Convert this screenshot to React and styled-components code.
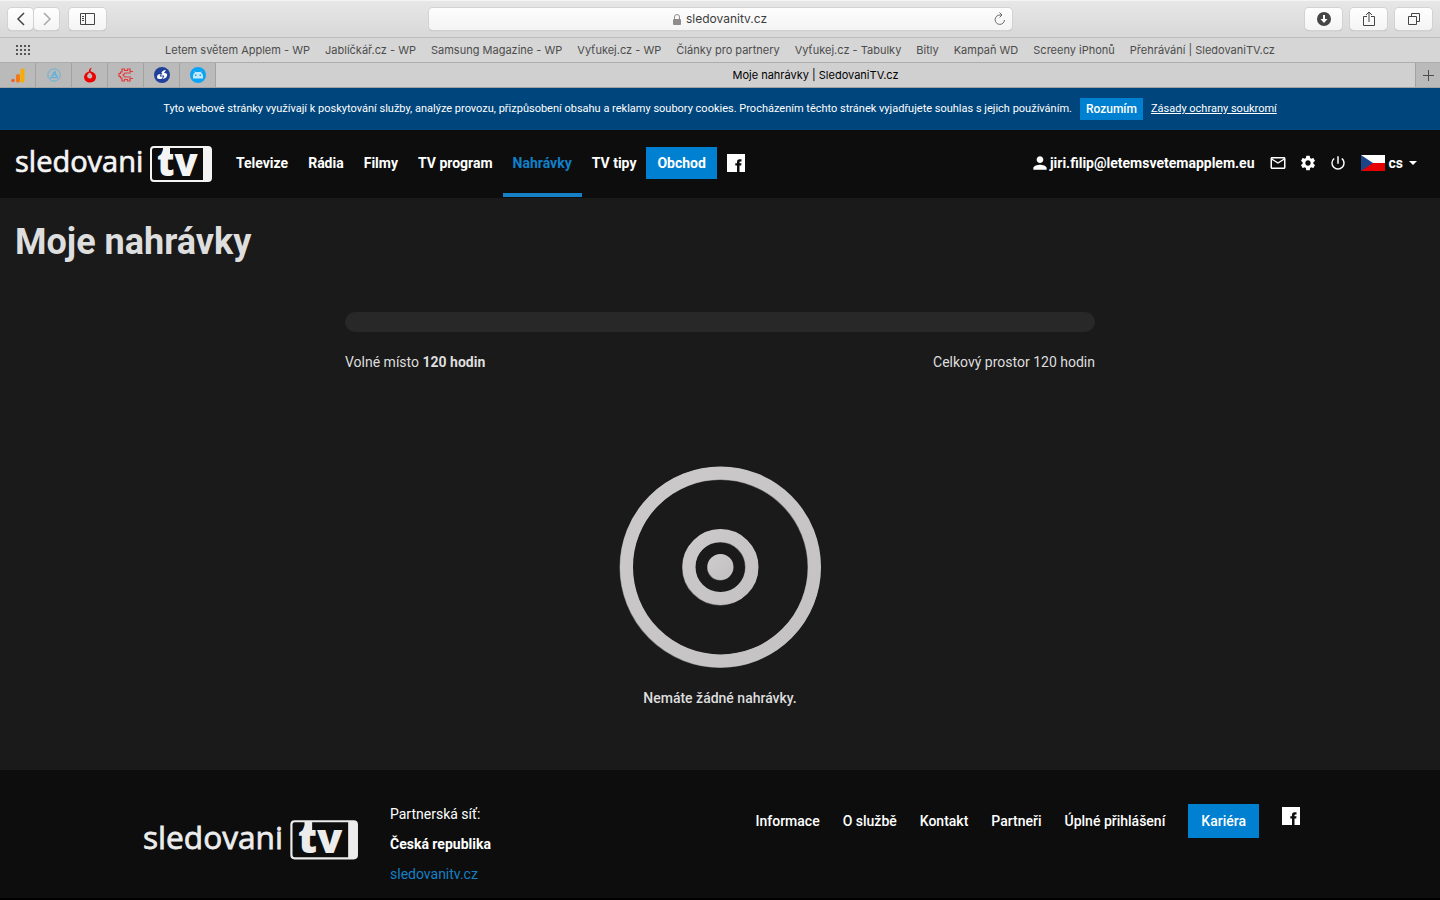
import * as React from 'react';
import styled, { createGlobalStyle } from 'styled-components';
import {
  MdPerson,
  MdOutlineMail,
  MdSettings,
  MdPowerSettingsNew,
} from 'react-icons/md';

const GlobalStyle = createGlobalStyle`
  * {
    box-sizing: border-box;
  }
  body {
    margin: 0;
    background: #000;
    color: #fff;
    font-family: Roboto, 'Liberation Sans', sans-serif;
    font-size: 14px;
    line-height: 20px;
  }
  a {
    color: inherit;
    text-decoration: none;
  }
  button {
    border: 0;
    padding: 0;
    font: inherit;
    color: inherit;
    background: none;
    cursor: pointer;
  }
  svg {
    display: block;
    flex: none;
  }
`;

const SPage = styled.div`
  min-height: 100vh;
  display: flex;
  flex-direction: column;
`;

/* browser window */

const SBrowser = styled.div`
  font-family: Inter, 'Liberation Sans', sans-serif;
  font-size: 11px;
  color: #4c4c4c;
`;

const SToolbar = styled.div`
  height: 38px;
  display: grid;
  grid-template-columns: 1fr 583px 1fr;
  align-items: center;
  padding: 0 8px;
  background: linear-gradient(#e7e7e7, #d8d8d8);
  border-top: 1px solid #f4f4f4;
  border-bottom: 1px solid #bdbdbd;
`;

const SToolGroup = styled.div`
  display: flex;
  justify-content: ${({ end }) => (end ? 'flex-end' : 'flex-start')};
  gap: ${({ gap }) => gap}px;
`;

const SToolButton = styled.button`
  width: ${({ narrow }) => (narrow ? 25 : 37)}px;
  height: 22px;
  display: flex;
  align-items: center;
  justify-content: center;
  border-radius: 4px;
  background: linear-gradient(#fff, #f4f4f4);
  box-shadow: 0 0 0 1px #d2d2d2, 0 1px 1px #a8a8a8;
  color: ${({ disabled }) => (disabled ? '#a8a8a8' : '#454545')};
`;

const SAddressBar = styled.div`
  height: 22px;
  display: grid;
  grid-template-columns: 24px 1fr 24px;
  align-items: center;
  justify-items: center;
  border-radius: 4px;
  background: linear-gradient(#fdfdfd, #f4f4f4);
  box-shadow: 0 0 0 1px #d2d2d2, 0 1px 1px #a8a8a8;
`;

const SAddress = styled.div`
  grid-column: 2;
  display: flex;
  align-items: center;
  gap: 5px;
  font-size: 12px;
  color: #3c3c3c;
`;

const SBookmarks = styled.div`
  height: 25px;
  display: grid;
  grid-template-columns: 32px 1fr 32px;
  align-items: center;
  background: #d6d6d6;
  border-bottom: 1px solid #adadad;

  & > svg {
    justify-self: end;
  }
`;

const SBookmarkList = styled.nav`
  display: flex;
  justify-content: center;
  gap: 15px;
  white-space: nowrap;
`;

const STabs = styled.div`
  height: 25px;
  display: flex;
  border-bottom: 1px solid #a3a3a3;
  background: #bababa;
`;

const SPinnedTab = styled.button`
  width: 36px;
  display: flex;
  align-items: center;
  justify-content: center;
  border-right: 1px solid #a3a3a3;
`;

const SActiveTab = styled.button`
  flex: 1;
  background: #d0d0d0;
  color: #000;
`;

const SNewTab = styled.button`
  width: 25px;
  display: flex;
  align-items: center;
  justify-content: center;
  border-left: 1px solid #a3a3a3;
`;

/* site */

const SCookies = styled.div`
  height: 42px;
  display: flex;
  align-items: center;
  justify-content: center;
  background: #00467c;
  font-size: 11px;
  white-space: nowrap;

  & a {
    text-decoration: underline;
  }
`;

const SAccept = styled.button`
  margin: 0 8px;
  padding: 0 6px;
  height: 22px;
  background: #0080d0;
  font-size: 12px;
  font-weight: 500;
`;

const SHeader = styled.header`
  height: 68px;
  display: flex;
  justify-content: space-between;
  padding: 0 21px 2px 15px;
  background: #0d0d0d;
  font-weight: 700;
`;

const SMenu = styled.nav`
  display: flex;
  align-items: center;

  & > a:first-child {
    margin-right: 14px;
  }
`;

const SMenuLink = styled.a`
  height: 68px;
  padding: 24px 10px 0;
  color: ${({ $active }) => ($active ? '#0f80cb' : '#fff')};
  border-bottom: 4px solid ${({ $active }) => ($active ? '#1580c6' : 'transparent')};
`;

const SShop = styled.a`
  padding: 6px 11px;
  margin-right: 10px;
  background: #0080d0;
`;

const SUser = styled.div`
  display: flex;
  align-items: center;
  gap: 12px;
`;

const SUserLink = styled.a`
  display: flex;
  align-items: center;
  margin-right: 2px;
`;

const SLanguage = styled.button`
  display: flex;
  align-items: center;
  gap: 4px;
  margin-left: 2px;
`;

const SMain = styled.main`
  flex: 1;
  padding: 22px 15px 60px;
  background: #1a1a1a;
  color: #dedede;
`;

const STitle = styled.h1`
  margin: 0 0 48px;
  font-size: 36px;
  line-height: 44px;
  font-weight: 700;
`;

const SContent = styled.section`
  max-width: 750px;
  margin: 0 auto;
`;

const SSpaceBar = styled.div`
  height: 20px;
  border-radius: 10px;
  background: #282828;
`;

const SSpaceInfo = styled.div`
  display: flex;
  justify-content: space-between;
  margin: 20px 0 94px;
`;

const SEmpty = styled.div`
  display: flex;
  flex-direction: column;
  align-items: center;
  gap: 20px;

  & p {
    margin: 0;
    font-weight: 500;
  }
`;

const SFooter = styled.footer`
  background: #0d0d0d;
  margin-bottom: 2px;
`;

const SFooterInner = styled.div`
  max-width: 1170px;
  margin: 0 auto;
  padding: 34px 5px 9px 8px;
  display: flex;
  align-items: flex-start;
  gap: 32px;
  font-weight: 500;

  & > a {
    margin-top: 2px;
  }
`;

const SPartners = styled.div`
  flex: 1;
  line-height: 30px;
  margin-top: -5px;
  font-weight: 400;

  & > * {
    display: block;
  }
  & > a {
    color: #1580c6;
  }
`;

const SFooterLinks = styled.nav`
  display: flex;
  align-items: center;
  gap: 23px;

  & > a:last-child {
    align-self: flex-start;
    margin-top: 3px;
  }
`;

const SCareer = styled.a`
  padding: 7px 13px;
  background: #0080d0;
`;

const SLogo = styled.svg`
  overflow: visible;
  font-family: 'Open Sans', sans-serif;
`;

const bookmarks = [
  'Letem světem Applem - WP',
  'Jablíčkář.cz - WP',
  'Samsung Magazine - WP',
  'Vyťukej.cz - WP',
  'Články pro partnery',
  'Vyťukej.cz - Tabulky',
  'Bitly',
  'Kampaň WD',
  'Screeny iPhonů',
  'Přehrávání | SledovaniTV.cz',
];

const menu = ['Televize', 'Rádia', 'Filmy', 'TV program', 'Nahrávky', 'TV tipy'];

const footerLinks = ['Informace', 'O službě', 'Kontakt', 'Partneři', 'Úplné přihlášení'];

const Stroke = ({ width, height, children, ...rest }) => (
  <svg
    width={width}
    height={height}
    viewBox={`0 0 ${width} ${height}`}
    fill="none"
    stroke="currentColor"
    {...rest}
  >
    {children}
  </svg>
);

const Logo = ({ width, color }) => (
  <SLogo width={width} viewBox="0 -13 197 60" fill={color}>
    <text x="0" y="26" fontSize="29" fontWeight="400" stroke={color} strokeWidth="0.7">
      sledovani
    </text>
    <path
      fillRule="evenodd"
      d="M139 0H193Q197 0 197 4V32Q197 36 193 36H139Q135 36 135 32V4Q135 0 139 0ZM139 2Q137 2 137 4V32Q137 34 139 34H188V2Z"
    />
    <rect x="148" y="1" width="7" height="9" />
    <text x="142" y="30" fontSize="38" fontWeight="800">
      tv
    </text>
  </SLogo>
);

const Facebook = () => (
  <svg width="18" height="18" viewBox="0 0 18 18" role="img" aria-label="Facebook">
    <rect width="18" height="18" fill="#fff" />
    <path
      fill="#0d0d0d"
      d="M10 18V11.500H8.300V9.300H10V8Q10 5.300 12.500 5.300H14.500V7.500H13.200Q12.500 7.500 12.500 8.200V9.300H14.500L14.200 11.500H12.500V18Z"
    />
  </svg>
);

const Flag = () => (
  <svg width="24" height="16" viewBox="0 0 24 16">
    <path fill="#fff" d="M0 0h24v8H0z" />
    <path fill="#e60000" d="M0 8h24v8H0z" />
    <path fill="#1c4489" d="M0 0l12 8-12 8z" />
  </svg>
);

const Disc = () => (
  <svg width="202" height="202" viewBox="0 0 202 202">
    <defs>
      <linearGradient id="disc" x1="0" y1="0" x2="1" y2="1">
        <stop offset="0" stopColor="#ccc9ca" />
        <stop offset="1" stopColor="#c4c2c3" />
      </linearGradient>
    </defs>
    <g fill="none" stroke="#777" strokeWidth="13">
      <circle cx="101" cy="101.500" r="94" />
      <circle cx="101" cy="101.500" r="31.500" />
      <circle cx="101" cy="101.500" r="6.500" />
    </g>
    <g fill="none" stroke="url(#disc)" strokeWidth="13">
      <circle cx="101.500" cy="101" r="94" />
      <circle cx="101.500" cy="101" r="31.500" />
      <circle cx="101.500" cy="101" r="6.500" />
    </g>
  </svg>
);

const AnalyticsIcon = () => (
  <svg width="14" height="15" viewBox="0 0 14 15">
    <rect x="9.500" y="0.500" width="4" height="14" rx="1.500" fill="#f9ab00" />
    <rect x="5" y="6" width="4" height="8.500" rx="1.500" fill="#f07a1a" />
    <circle cx="2" cy="12.500" r="1.800" fill="#ee6420" />
  </svg>
);

const SwiftIcon = () => (
  <svg width="14" height="14" viewBox="0 0 14 14" fill="none" stroke="#62b3dc">
    <circle cx="7" cy="7" r="6.200" />
    <path d="M3 9.500h8M4.500 8L7.500 6M8 3.500l.500 3 2 2M6 5.500L8 3.500" strokeWidth="1.600" />
  </svg>
);

const PearIcon = () => (
  <svg width="14" height="16" viewBox="0 0 14 16">
    <path
      fill="#f00000"
      d="M9 .5Q5.500 1.500 6 4.500Q1 6 1 10.500Q2 15.500 7 15.500Q13 15 13 10Q13 6.500 9.500 5Q7.500 4.500 7.500 4Q7.500 2 9 .5Z"
    />
    <path fill="#bababa" d="M6.500 5.500Q4 7 4 9.500Q5 12 7.500 11.500Q10 10.500 9 8Q8 6 6.500 5.500Z" />
  </svg>
);

const CircuitIcon = () => (
  <svg width="16" height="16" viewBox="0 0 16 16" fill="none" stroke="#e33a3a">
    <path
      strokeWidth="1.200"
      d="M15 4.500h-3V2H9.500v1.500h-3V2H4v3H2.500v1.500H1v3h1.500V11H4v3h2.500v-1.500h3V14H12v-2.500h3M13 6H7L5 8l2 2h6"
    />
  </svg>
);

const SamsungIcon = () => (
  <svg width="16" height="16" viewBox="0 0 16 16">
    <circle cx="8" cy="8" r="8" fill="#20409a" />
    <path fill="#fff" d="M3 10Q3 7 7 7Q8 3 12 3L10 6Q14 6 13 9Q12 12 7 12H5Q3 12 3 10Z" />
    <path d="M8 6L6 9h4l-2 3" fill="none" stroke="#20409a" />
  </svg>
);

const AndroidIcon = () => (
  <svg width="16" height="16" viewBox="0 0 16 16">
    <circle cx="8" cy="8" r="8" fill="#0ba4f4" />
    <path fill="#c5e8fb" d="M3 11.500V9Q3 6.500 5 5.500L4 4l1.500 1h5L12 4l-1 1.500Q13 6.500 13 9V11.500Z" />
    <path fill="#0ba4f4" d="M5 7.500h1.500V9H5zM9.500 7.500H11V9H9.500z" />
  </svg>
);

const pinned = [
  ['Google Analytics', AnalyticsIcon],
  ['Letem světem Applem', SwiftIcon],
  ['Jablíčkář.cz', PearIcon],
  ['Vyťukej.cz', CircuitIcon],
  ['Samsung Magazine', SamsungIcon],
  ['Android', AndroidIcon],
];

const Browser = () => (
  <SBrowser>
    <SToolbar>
      <SToolGroup gap={10}>
        <SToolGroup gap={1}>
          <SToolButton narrow aria-label="Zpět">
            <Stroke width="12" height="14" strokeWidth="1.500">
              <path d="M9 1L3 7l6 6" />
            </Stroke>
          </SToolButton>
          <SToolButton narrow disabled aria-label="Vpřed">
            <Stroke width="12" height="14" strokeWidth="1.500">
              <path d="M3 1l6 6-6 6" />
            </Stroke>
          </SToolButton>
        </SToolGroup>
        <SToolButton aria-label="Boční panel">
          <Stroke width="15" height="12">
            <path d="M.5.5h14v11H.5zM5.500.5v11M2 3.500h2M2 5.500h2M2 7.500h2" />
          </Stroke>
        </SToolButton>
      </SToolGroup>
      <SAddressBar>
        <SAddress>
          <svg width="8" height="11" viewBox="0 0 8 11">
            <rect y="5" width="8" height="6" rx="1" fill="#8c8c8c" />
            <path d="M1.500 5V3a2.500 2.500 0 0 1 5 0v2" fill="none" stroke="#8c8c8c" />
          </svg>
          sledovanitv.cz
        </SAddress>
        <button aria-label="Načíst znovu">
          <Stroke width="12" height="14" color="#6a6a6a">
            <path d="M10.500 8A4.700 4.700 0 1 1 6 3h2M5.500.5L8 3 5.500 5.500" />
          </Stroke>
        </button>
      </SAddressBar>
      <SToolGroup end gap={8}>
        <SToolButton aria-label="Stahování">
          <svg width="14" height="14" viewBox="0 0 14 14">
            <circle cx="7" cy="7" r="7" fill="#454545" />
            <path d="M6 3h2v4h2.500L7 11 3.500 7H6z" fill="#fff" />
          </svg>
        </SToolButton>
        <SToolButton aria-label="Sdílet">
          <Stroke width="12" height="16">
            <path d="M4 5.500H.5v9h11v-9H8M6 11V1M3 4l3-3 3 3" />
          </Stroke>
        </SToolButton>
        <SToolButton aria-label="Panely">
          <Stroke width="12" height="12">
            <path d="M.5 3.500h8v8h-8zM3.500 3V.5h8v8H9" />
          </Stroke>
        </SToolButton>
      </SToolGroup>
    </SToolbar>
    <SBookmarks>
      <svg width="16" height="10" viewBox="0 0 16 10" fill="#555">
        {[0, 4, 8].map((y) =>
          [0, 4, 8, 12].map((x) => <rect key={`${x}-${y}`} x={x} y={y} width="2" height="2" />)
        )}
      </svg>
      <SBookmarkList>
        {bookmarks.map((name) => (
          <a key={name} href="#">
            {name}
          </a>
        ))}
      </SBookmarkList>
    </SBookmarks>
    <STabs>
      {pinned.map(([name, Icon]) => (
        <SPinnedTab key={name} aria-label={name}>
          <Icon />
        </SPinnedTab>
      ))}
      <SActiveTab>Moje nahrávky | SledovaniTV.cz</SActiveTab>
      <SNewTab aria-label="Nový panel">
        <Stroke width="11" height="11">
          <path d="M5.500 0v11M0 5.500h11" />
        </Stroke>
      </SNewTab>
    </STabs>
  </SBrowser>
);

const Header = () => (
  <SHeader>
    <SMenu>
      <a href="#" aria-label="Domů">
        <Logo width={197} color="#f4f4f4" />
      </a>
      {menu.map((name) => (
        <SMenuLink key={name} href="#" $active={name === 'Nahrávky'}>
          {name}
        </SMenuLink>
      ))}
      <SShop href="#">Obchod</SShop>
      <a href="#">
        <Facebook />
      </a>
    </SMenu>
    <SUser>
      <SUserLink href="#">
        <MdPerson size={20} />
        jiri.filip@letemsvetemapplem.eu
      </SUserLink>
      <a href="#" aria-label="Zprávy">
        <MdOutlineMail size={18} />
      </a>
      <a href="#" aria-label="Nastavení">
        <MdSettings size={18} />
      </a>
      <a href="#" aria-label="Odhlásit">
        <MdPowerSettingsNew size={18} />
      </a>
      <SLanguage>
        <Flag />
        cs
        <svg width="12" height="4" viewBox="0 0 12 4">
          <path d="M2 0h8L6 4z" fill="#fff" />
        </svg>
      </SLanguage>
    </SUser>
  </SHeader>
);

const Footer = () => (
  <SFooter>
    <SFooterInner>
      <a href="#" aria-label="Domů">
        <Logo width={215} color="#ececec" />
      </a>
      <SPartners>
        <span>Partnerská síť:</span>
        <strong>Česká republika</strong>
        <a href="#">sledovanitv.cz</a>
      </SPartners>
      <SFooterLinks>
        {footerLinks.map((name) => (
          <a key={name} href="#">
            {name}
          </a>
        ))}
        <SCareer href="#">Kariéra</SCareer>
        <a href="#">
          <Facebook />
        </a>
      </SFooterLinks>
    </SFooterInner>
  </SFooter>
);

const App = () => (
  <SPage>
    <GlobalStyle />
    <Browser />
    <SCookies>
      <span>
        Tyto webové stránky využívají k poskytování služby, analýze provozu, přizpůsobení obsahu a
        reklamy soubory cookies. Procházením těchto stránek vyjadřujete souhlas s jejich používáním.
      </span>
      <SAccept>Rozumím</SAccept>
      <a href="#">Zásady ochrany soukromí</a>
    </SCookies>
    <Header />
    <SMain>
      <STitle>Moje nahrávky</STitle>
      <SContent>
        <SSpaceBar />
        <SSpaceInfo>
          <span>
            Volné místo <strong>120 hodin</strong>
          </span>
          <span>Celkový prostor 120 hodin</span>
        </SSpaceInfo>
        <SEmpty>
          <Disc />
          <p>Nemáte žádné nahrávky.</p>
        </SEmpty>
      </SContent>
    </SMain>
    <Footer />
  </SPage>
);

export default App;
